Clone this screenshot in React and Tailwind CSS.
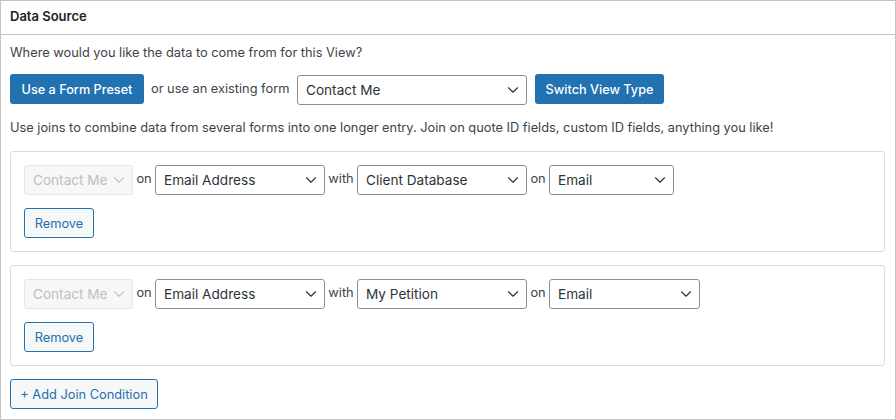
import { ChevronDown } from "lucide-react";

function Select({ label, className, disabled }) {
  return (
    <div
      className={`flex h-[30px] items-center justify-between rounded-[3px] border pl-2 pr-1 text-[13.6px] ${
        disabled ? "border-[#e6e7e9] bg-[#f6f7f7] text-[#bdbfc2]" : "border-[#8c8f94] bg-white text-[#2c3338]"
      } ${className}`}
    >
      <span>{label}</span>
      <ChevronDown size={18} strokeWidth={1.5} className={disabled ? "shrink-0 text-[#c3c4c7]" : "shrink-0 text-[#2c3338]"} />
    </div>
  );
}

function PrimaryButton({ children, className }) {
  return (
    <button className={`flex h-[30px] items-center justify-center rounded-[3px] bg-[#2271b1] pt-px text-[12.7px] font-medium text-white ${className}`}>
      {children}
    </button>
  );
}

function SecondaryButton({ children, className }) {
  return (
    <button className={`flex h-[30px] items-center justify-center rounded-[3px] border border-[#2271b1] bg-[#f6f7f7] pt-px text-[12.8px] text-[#2271b1] ${className}`}>
      {children}
    </button>
  );
}

function JoinRow({ form, lastWidth }) {
  return (
    <div className="flex h-[101px] flex-col gap-[13px] rounded-[3px] border border-[#dcdcde] pl-[13px] pt-[13px]">
      <div className="flex items-center text-[12.8px] text-[#3c434a]">
        <Select label="Contact Me" disabled className="w-[109px]" />
        <span className="w-[22px] pb-0.5 text-center">on</span>
        <Select label="Email Address" className="w-[170px]" />
        <span className="w-[32px] pb-0.5 text-center">with</span>
        <Select label={form} className="w-[170px]" />
        <span className="w-[22px] pb-0.5 text-center">on</span>
        <Select label="Email" className={lastWidth} />
      </div>
      <SecondaryButton className="w-[70px]">Remove</SecondaryButton>
    </div>
  );
}

export default function App() {
  return (
    <div className="h-[420px] w-[896px] bg-white font-['Inter',sans-serif] antialiased">
      <div className="flex h-full flex-col border border-[#c3c4c7]">
        <div className="flex h-[34px] items-center border-b border-[#c3c4c7] pb-0.5 pl-[9px] text-[13px] font-semibold text-[#1d2327]">
          Data Source
        </div>
        <div className="flex flex-col px-[9px] text-[12.8px] text-[#3c434a]">
          <p className="mt-[9px] h-[18px] leading-[18px]">Where would you like the data to come from for this View?</p>
          <div className="mt-[11px] flex items-center">
            <PrimaryButton className="w-[134px]">Use a Form Preset</PrimaryButton>
            <span className="ml-[7px] w-[146px]">or use an existing form</span>
            <Select label="Contact Me" className="mt-0.5 w-[230px]" />
            <PrimaryButton className="ml-2 w-[129px]">Switch View Type</PrimaryButton>
          </div>
          <p className="mt-[14px] h-[18px] leading-[18px]">
            Use joins to combine data from several forms into one longer entry. Join on quote ID fields, custom ID fields, anything you like!
          </p>
          <div className="mt-[14px] flex w-[875px] flex-col gap-[13px]">
            <JoinRow form="Client Database" lastWidth="w-[125px]" />
            <JoinRow form="My Petition" lastWidth="w-[151px]" />
          </div>
          <SecondaryButton className="mt-[13px] w-[148px]">+ Add Join Condition</SecondaryButton>
        </div>
      </div>
    </div>
  );
}
